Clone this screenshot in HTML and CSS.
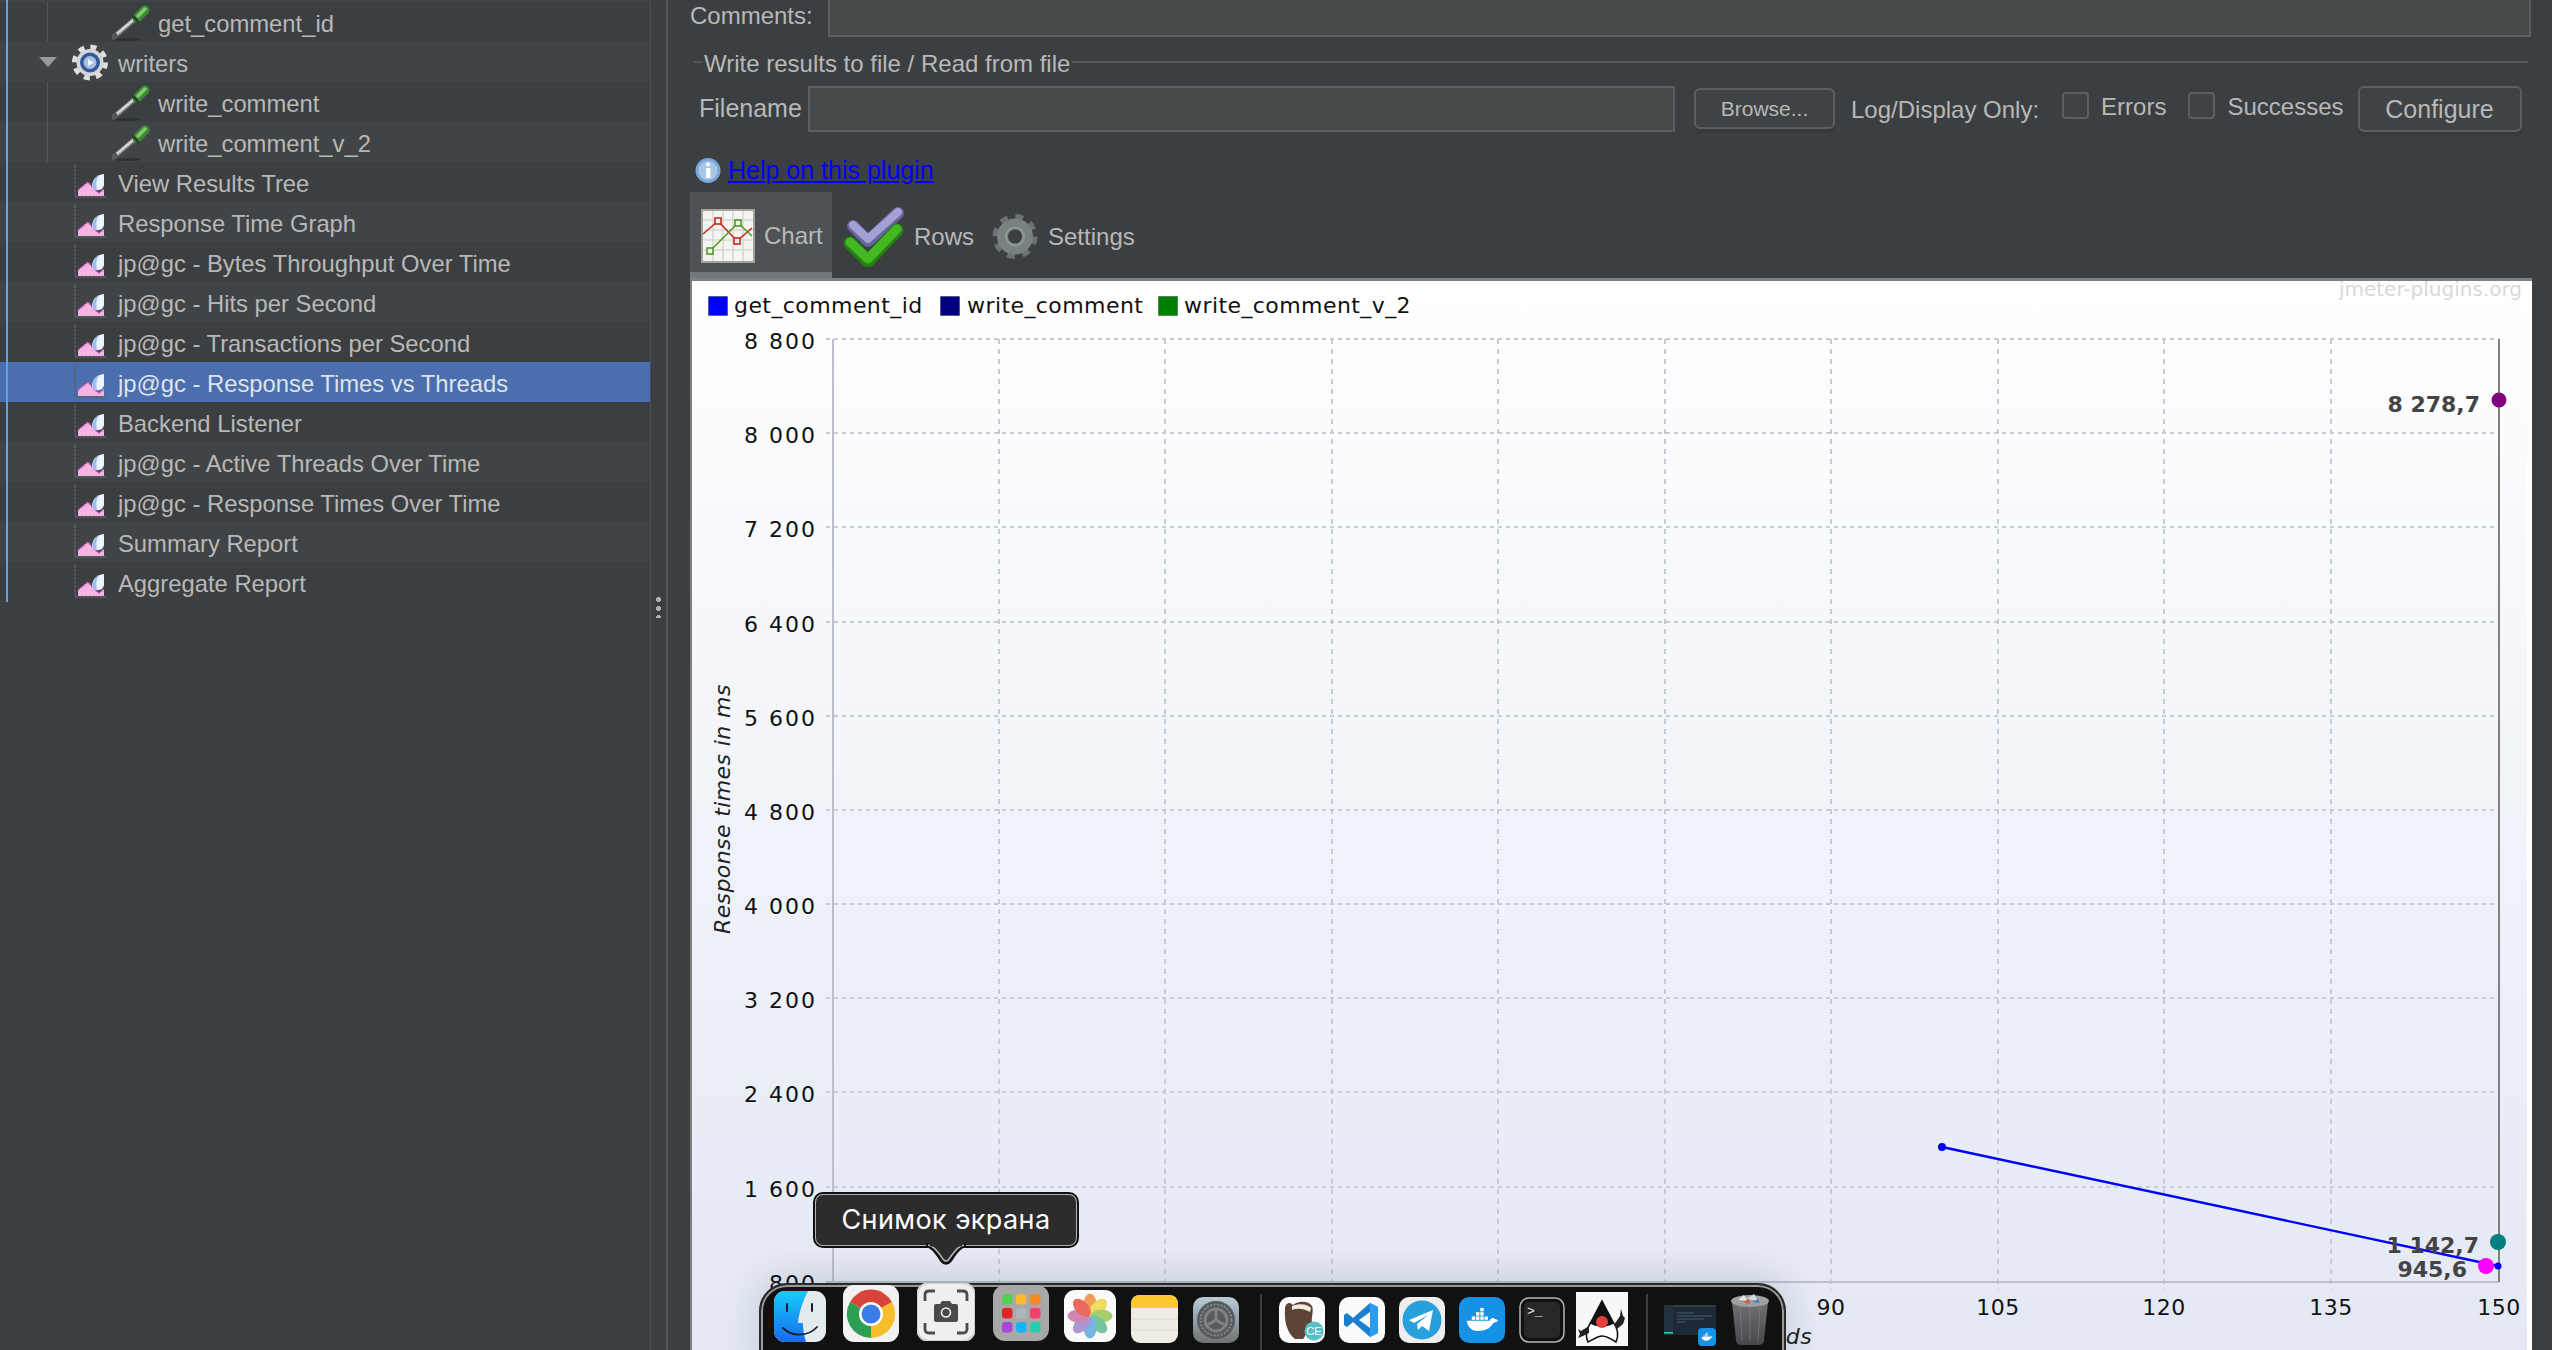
FILE: index.html
```html
<!doctype html>
<html>
<head>
    <meta charset="UTF-8">
    <title>Apache JMeter - Response Times vs Threads</title>
    <link rel="stylesheet" href="styles.css">
</head>

<body>
<svg class="defs" width="0" height="0">
    <defs>
        <symbol id="i-sampler" viewBox="0 0 38 37">
            <ellipse cx="15" cy="35.5" rx="14" ry="1.3" fill="#2b2d2f"/>
            <path d="M2 33 L23 15" stroke="#55585a" stroke-width="6" stroke-linecap="round"/>
            <path d="M5 30 L22 15.5" stroke="#d4d4d4" stroke-width="3"/>
            <path d="M7 30 L22 17.5" stroke="#8c8c8c" stroke-width="1.2" stroke-dasharray="2 1.5"/>
            <path d="M25 14 L33 6" stroke="#3f8a36" stroke-width="9" stroke-linecap="round"/>
            <path d="M26 12 L33 5" stroke="#80ca68" stroke-width="3.5" stroke-linecap="round"/>
            <path d="M20 11 L27 19" stroke="#2c3a2c" stroke-width="2.5"/>
        </symbol>
        <symbol id="i-listener" viewBox="0 0 34 34">
            <path d="M1 0 V32 H33" fill="none" stroke="#5e6163" stroke-width="1.5" stroke-dasharray="3 1"/>
            <path d="M4 31 V25 L14 17 L21 25 L25 28 L30 24 V31 Z" fill="#f5b4e4"/>
            <path d="M4 25 L14 17 L21 25 L25 28 L30 24" fill="none" stroke="#cf4fa8" stroke-width="1.5" stroke-dasharray="2 1.5"/>
            <path d="M18 22 C18 15 22 10 30 9 V20 C29 26 21 27 18 22 Z" fill="#eef4fd"/>
            <path d="M18 22 C18 16 21 12 25 10 C22 15 22 20 23 25 C21 25 19 24 18 22 Z" fill="#9dc0f0"/>
        </symbol>
        <symbol id="i-whale" viewBox="0 0 40 30">
            <g fill="#fff">
                <rect x="8" y="12" width="4" height="4"/><rect x="13" y="12" width="4" height="4"/>
                <rect x="18" y="12" width="4" height="4"/><rect x="13" y="7" width="4" height="4"/>
                <rect x="18" y="7" width="4" height="4"/><rect x="18" y="2" width="4" height="4"/>
                <rect x="23" y="12" width="4" height="4"/>
                <path d="M2 17 H29 C30 14 33 13 35 15 C37 15 38 16 39 17 C37 19 34 19 33 20 C30 26 24 29 15 29 C7 29 3 24 2 17 Z"/>
            </g>
        </symbol>
    </defs>
</svg>

<div class="app">
    <div class="tree">
        <div class="row-top"></div>
        <div class="row"><span class="guide"></span><svg class="ic-sampler"><use href="#i-sampler"/></svg><span class="label">get_comment_id</span></div>
        <div class="row alt">
            <span class="twisty"></span>
            <svg class="ic-gear" viewBox="0 0 36 37">
                <circle cx="18" cy="18.5" r="15.5" fill="none" stroke="#dedede" stroke-width="5" stroke-dasharray="6 6.17"/>
                <circle cx="18" cy="18.5" r="13.5" fill="#d6d6d6"/>
                <circle cx="18" cy="18.5" r="10" fill="#2f5a9e"/>
                <circle cx="18" cy="18.5" r="6.5" fill="#a8bfe0"/>
                <path d="M16 15 L22 18.5 L16 22 Z" fill="#f2f5fa"/>
            </svg>
            <span class="label">writers</span>
        </div>
        <div class="row"><span class="guide"></span><svg class="ic-sampler"><use href="#i-sampler"/></svg><span class="label">write_comment</span></div>
        <div class="row alt"><span class="guide"></span><svg class="ic-sampler"><use href="#i-sampler"/></svg><span class="label">write_comment_v_2</span></div>
        <div class="row leaf"><svg class="ic-listener"><use href="#i-listener"/></svg><span class="label">View Results Tree</span></div>
        <div class="row leaf alt"><svg class="ic-listener"><use href="#i-listener"/></svg><span class="label">Response Time Graph</span></div>
        <div class="row leaf"><svg class="ic-listener"><use href="#i-listener"/></svg><span class="label">jp@gc - Bytes Throughput Over Time</span></div>
        <div class="row leaf alt"><svg class="ic-listener"><use href="#i-listener"/></svg><span class="label">jp@gc - Hits per Second</span></div>
        <div class="row leaf"><svg class="ic-listener"><use href="#i-listener"/></svg><span class="label">jp@gc - Transactions per Second</span></div>
        <div class="row leaf selected"><svg class="ic-listener"><use href="#i-listener"/></svg><span class="label">jp@gc - Response Times vs Threads</span></div>
        <div class="row leaf"><svg class="ic-listener"><use href="#i-listener"/></svg><span class="label">Backend Listener</span></div>
        <div class="row leaf alt"><svg class="ic-listener"><use href="#i-listener"/></svg><span class="label">jp@gc - Active Threads Over Time</span></div>
        <div class="row leaf"><svg class="ic-listener"><use href="#i-listener"/></svg><span class="label">jp@gc - Response Times Over Time</span></div>
        <div class="row leaf alt"><svg class="ic-listener"><use href="#i-listener"/></svg><span class="label">Summary Report</span></div>
        <div class="row leaf"><svg class="ic-listener"><use href="#i-listener"/></svg><span class="label">Aggregate Report</span></div>
    </div>

    <div class="splitter"><span class="grip"></span></div>

    <div class="main">
        <div class="comments">
            <label>Comments:</label>
            <div class="field"></div>
        </div>

        <div class="legend"><span>Write results to file / Read from file</span></div>

        <div class="file-row">
            <label class="filename">Filename</label>
            <div class="field file-field"></div>
            <button class="btn btn-small">Browse...</button>
            <span class="log-label">Log/Display Only:</span>
            <span class="check"></span><span class="check-text">Errors</span>
            <span class="check check-2"></span><span class="check-text">Successes</span>
            <button class="btn btn-large">Configure</button>
        </div>

        <div class="help">
            <svg class="ic-info" viewBox="0 0 26 27">
                <circle cx="13" cy="13.5" r="12.5" fill="#7aa7d8"/>
                <circle cx="13" cy="13.5" r="9.5" fill="#a9c8e8"/>
                <circle cx="13" cy="7.5" r="2" fill="#fff"/>
                <rect x="11" y="11" width="4.5" height="10" fill="#fff"/>
            </svg>
            <a href="#">Help on this plugin</a>
        </div>

        <div class="tabs">
            <div class="tab tab-active">
                <svg class="ic-chart" viewBox="0 0 54 54">
                    <rect width="54" height="54" fill="#a2a2a0"/>
                    <rect x="2" y="2" width="50" height="50" fill="#f4f4f1"/>
                    <path d="M2 11 H52 M2 21 H52 M2 31 H52 M2 41 H52 M12 2 V52 M22 2 V52 M32 2 V52 M42 2 V52" stroke="#d6d6d3" stroke-width="1.6"/>
                    <path d="M2 25 L17 12 L36 32 L51 19" fill="none" stroke="#c8281c" stroke-width="1.6"/>
                    <path d="M9 42 L37 14 L51 27" fill="none" stroke="#4c9a22" stroke-width="1.6"/>
                    <rect x="14" y="9" width="6" height="6" fill="#f4f4f1" stroke="#c8281c" stroke-width="1.6"/>
                    <rect x="33" y="29" width="6" height="6" fill="#f4f4f1" stroke="#c8281c" stroke-width="1.6"/>
                    <rect x="34" y="11" width="6" height="6" fill="#f4f4f1" stroke="#4c9a22" stroke-width="1.6"/>
                    <rect x="6" y="39" width="6" height="6" fill="#f4f4f1" stroke="#4c9a22" stroke-width="1.6"/>
                </svg>
                <span>Chart</span>
            </div>
            <div class="tab">
                <svg class="ic-rows" viewBox="0 0 61 60">
                    <path d="M9 19 L24 34 L54 6" fill="none" stroke="#66649c" stroke-width="12" stroke-linecap="round" stroke-linejoin="round"/>
                    <path d="M9 18 L24 32 L54 5" fill="none" stroke="#a3a1d3" stroke-width="8" stroke-linecap="round" stroke-linejoin="round"/>
                    <path d="M6 36 L24 54 L53 23" fill="none" stroke="#23830f" stroke-width="13" stroke-linecap="round" stroke-linejoin="round"/>
                    <path d="M6 35 L24 52 L53 22" fill="none" stroke="#44b822" stroke-width="9" stroke-linecap="round" stroke-linejoin="round"/>
                </svg>
                <span>Rows</span>
            </div>
            <div class="tab">
                <svg class="ic-settings" viewBox="0 0 46 47">
                    <circle cx="23" cy="23.5" r="19" fill="none" stroke="#6c7273" stroke-width="7" stroke-dasharray="7.4 7.5"/>
                    <circle cx="23" cy="23.5" r="12.5" fill="none" stroke="#7a8181" stroke-width="11"/>
                    <circle cx="23" cy="23.5" r="9" fill="none" stroke="#929999" stroke-width="2"/>
                </svg>
                <span>Settings</span>
            </div>
        </div>

        <div class="chart">
            <svg class="plot" viewBox="692 281 1840 1069">
                <defs>
                    <linearGradient id="plot-bg" x1="0" y1="0" x2="0" y2="1">
                        <stop offset="0" stop-color="#ffffff"/>
                        <stop offset="1" stop-color="#e3e8f4"/>
                    </linearGradient>
                </defs>
                <rect x="692" y="281" width="1835" height="1069" fill="url(#plot-bg)"/>

                <rect class="swatch" x="708.5" y="296.5" width="19" height="19" fill="#0000ff"/>
                <text class="legend-text" x="734" y="313">get_comment_id</text>
                <rect class="swatch" x="940.5" y="296.5" width="19" height="19" fill="#000080"/>
                <text class="legend-text" x="967" y="313">write_comment</text>
                <rect class="swatch" x="1158.5" y="296.5" width="19" height="19" fill="#008000"/>
                <text class="legend-text" x="1184" y="313">write_comment_v_2</text>
                <text class="watermark" x="2522" y="296">jmeter-plugins.org</text>

                <path class="grid" d="M826 339 H2499 M826 433 H2499 M826 527 H2499 M826 622 H2499 M826 716 H2499 M826 810 H2499 M826 904 H2499 M826 998 H2499 M826 1092 H2499 M826 1187 H2499"/>
                <path class="grid-v" d="M999 339 V1290 M1165 339 V1290 M1332 339 V1290 M1498 339 V1290 M1665 339 V1290 M1831 339 V1290 M1998 339 V1290 M2164 339 V1290 M2331 339 V1290"/>
                <path class="axis" d="M833 339 V1283 M826 1282 H2499"/>
                <path class="axis-end" d="M2499 339 V1282"/>

                <g class="y-labels">
                    <text x="817" y="349">8 800</text>
                    <text x="817" y="443">8 000</text>
                    <text x="817" y="537">7 200</text>
                    <text x="817" y="632">6 400</text>
                    <text x="817" y="726">5 600</text>
                    <text x="817" y="820">4 800</text>
                    <text x="817" y="914">4 000</text>
                    <text x="817" y="1008">3 200</text>
                    <text x="817" y="1102">2 400</text>
                    <text x="817" y="1197">1 600</text>
                    <text x="817" y="1291">800</text>
                </g>
                <g class="x-labels">
                    <text x="1831" y="1315">90</text>
                    <text x="1998" y="1315">105</text>
                    <text x="2164" y="1315">120</text>
                    <text x="2331" y="1315">135</text>
                    <text x="2499" y="1315">150</text>
                </g>
                <text class="axis-title" transform="translate(730 934) rotate(-90)">Response times in ms</text>
                <text class="axis-title" x="1812" y="1344" text-anchor="end">Number of active threads</text>

                <path d="M1942 1147 L2498 1266" stroke="#0000ff" stroke-width="2.4" fill="none"/>
                <circle cx="1942" cy="1147" r="4" fill="#0000ff"/>
                <circle cx="2499" cy="400" r="7.5" fill="#800080"/>
                <circle cx="2498" cy="1242" r="8" fill="#008080"/>
                <circle cx="2486" cy="1266" r="8" fill="#ff00ff"/>
                <circle cx="2498" cy="1266" r="3.5" fill="#0000ff"/>
                <g class="point-labels">
                    <text x="2480" y="412">8 278,7</text>
                    <text x="2479" y="1253">1 142,7</text>
                    <text x="2467" y="1277">945,6</text>
                </g>
            </svg>
        </div>
    </div>
</div>

<div class="tooltip">
    Снимок экрана
    <svg class="tooltip-tip" viewBox="0 0 44 22">
        <path d="M2 1 C8 2 11 5 18 16 Q22 21 26 16 C33 5 36 2 42 1" fill="none" stroke="#111" stroke-width="4.5"/>
        <path d="M2 1 C8 2 11 5 18 16 Q22 21 26 16 C33 5 36 2 42 1 Z" fill="#2c2c2c"/>
        <path d="M4 1 C9 2 12 5 19 15 Q22 19 25 15 C32 5 35 2 40 1" fill="none" stroke="#b5b5b5" stroke-width="1.4"/>
        <path d="M6 0 H38 V2.5 H6 Z" fill="#2c2c2c"/>
    </svg>
</div>

<div class="dock">
    <svg class="d-finder" viewBox="0 0 52 51">
        <defs>
            <linearGradient id="finder-blue" x1="0" y1="0" x2="0" y2="1"><stop offset="0" stop-color="#14cdfb"/><stop offset="1" stop-color="#1a6bee"/></linearGradient>
            <clipPath id="finder-clip"><rect width="52" height="51" rx="11"/></clipPath>
        </defs>
        <g clip-path="url(#finder-clip)">
            <rect width="52" height="51" fill="#e4ebef"/>
            <path d="M0 0 H34 C28 12 25 22 24 32 H29 C29 38 30 45 32 51 H0 Z" fill="url(#finder-blue)"/>
            <path d="M13 13 V20 M38 13 V20" stroke="#15202e" stroke-width="2" stroke-linecap="round"/>
            <path d="M9 37 C18 46 34 46 43 36" fill="none" stroke="#15202e" stroke-width="1.8" stroke-linecap="round"/>
        </g>
    </svg>
    <svg class="d-chrome" viewBox="0 0 56 57">
        <rect width="56" height="57" rx="11" fill="#f2f2f2"/>
        <path d="M28 29 L7 17 A24 24 0 0 1 49 17 Z" fill="#d9443a"/>
        <path d="M28 29 L7 17 A24 24 0 0 0 28 53 Z" fill="#2f9e55"/>
        <path d="M28 29 L49 17 A24 24 0 0 1 28 53 Z" fill="#f8bd2c"/>
        <circle cx="28" cy="29" r="12" fill="#fff"/>
        <circle cx="28" cy="29" r="9.5" fill="#3a7de8"/>
    </svg>
    <svg class="d-shot" viewBox="0 0 58 58">
        <rect width="58" height="58" rx="12" fill="#efefef" stroke="#cfcfcf" stroke-width="2"/>
        <path d="M8 18 V12 Q8 8 12 8 H18 M40 8 H46 Q50 8 50 12 V18 M8 40 V46 Q8 50 12 50 H18 M40 50 H46 Q50 50 50 46 V40" fill="none" stroke="#4c4c4c" stroke-width="2.8"/>
        <path d="M17 23 Q17 21 19 21 H23 L25 18 H33 L35 21 H39 Q41 21 41 23 V37 Q41 39 39 39 H19 Q17 39 17 37 Z" fill="#4a4a4a"/>
        <circle cx="29" cy="29.5" r="4.5" fill="none" stroke="#efefef" stroke-width="1.6"/>
    </svg>
    <svg class="d-launch" viewBox="0 0 56 56">
        <rect width="56" height="56" rx="12" fill="#a8a8a8"/>
        <rect x="9" y="9" width="10.5" height="10.5" rx="3" fill="#53d052"/>
        <rect x="23" y="9" width="10.5" height="10.5" rx="3" fill="#fbbb2c"/>
        <rect x="37" y="9" width="10.5" height="10.5" rx="3" fill="#f58a25"/>
        <rect x="9" y="23" width="10.5" height="10.5" rx="3" fill="#e0242c"/>
        <rect x="23" y="23" width="10.5" height="10.5" rx="3" fill="#a9b5ba"/>
        <rect x="37" y="23" width="10.5" height="10.5" rx="3" fill="#f0416a"/>
        <rect x="9" y="37" width="10.5" height="10.5" rx="3" fill="#a848d8"/>
        <rect x="23" y="37" width="10.5" height="10.5" rx="3" fill="#11b4f7"/>
        <rect x="37" y="37" width="10.5" height="10.5" rx="3" fill="#24cfb0"/>
    </svg>
    <svg class="d-photos" viewBox="0 0 52 52">
        <rect width="52" height="52" rx="11" fill="#fbfbfb"/>
        <g opacity=".82">
            <ellipse cx="26" cy="14.5" rx="6.5" ry="11" fill="#f28a2e"/>
            <ellipse cx="26" cy="14.5" rx="6.5" ry="11" fill="#ecd73c" transform="rotate(45 26 26)"/>
            <ellipse cx="26" cy="14.5" rx="6.5" ry="11" fill="#93c650" transform="rotate(90 26 26)"/>
            <ellipse cx="26" cy="14.5" rx="6.5" ry="11" fill="#57b98a" transform="rotate(135 26 26)"/>
            <ellipse cx="26" cy="14.5" rx="6.5" ry="11" fill="#5aa5e0" transform="rotate(180 26 26)"/>
            <ellipse cx="26" cy="14.5" rx="6.5" ry="11" fill="#9a80c6" transform="rotate(225 26 26)"/>
            <ellipse cx="26" cy="14.5" rx="6.5" ry="11" fill="#c86fa0" transform="rotate(270 26 26)"/>
            <ellipse cx="26" cy="14.5" rx="6.5" ry="11" fill="#e84a40" transform="rotate(315 26 26)"/>
        </g>
    </svg>
    <svg class="d-notes" viewBox="0 0 47 48">
        <rect width="47" height="48" rx="9" fill="#efece4"/>
        <path d="M0 13 V9 Q0 0 9 0 H38 Q47 0 47 9 V13 Z" fill="#fdc92e"/>
        <path d="M0 24 H47 M0 35 H47" stroke="#dcd9d0" stroke-width="1"/>
    </svg>
    <svg class="d-prefs" viewBox="0 0 46 46">
        <defs><linearGradient id="prefs-bg" x1="0" y1="0" x2="0" y2="1"><stop offset="0" stop-color="#b9ccd6"/><stop offset="1" stop-color="#6f7275"/></linearGradient></defs>
        <rect width="46" height="46" rx="10" fill="url(#prefs-bg)"/>
        <circle cx="23" cy="23" r="19" fill="#565a5e"/>
        <circle cx="23" cy="23" r="15.5" fill="none" stroke="#85898d" stroke-width="2" stroke-dasharray="2 1.5"/>
        <circle cx="23" cy="23" r="11" fill="none" stroke="#7e8286" stroke-width="3"/>
        <path d="M23 23 V13 M23 23 L14 28 M23 23 L32 28" stroke="#7e8286" stroke-width="3"/>
    </svg>
    <span class="dock-sep"></span>
    <svg class="d-dbeaver" viewBox="0 0 46 46">
        <rect width="46" height="46" rx="10" fill="#fbfbfb"/>
        <path d="M6 12 C6 6 11 4 14 8 C20 3 30 4 33 9 C35 14 32 21 33 26 C26 34 28 38 24 42 H16 C8 36 5 24 6 12 Z" fill="#5d4436"/>
        <path d="M13 9 C20 6 29 7 32 11 L31 15 C24 11 18 11 13 13 Z" fill="#efe9e0"/>
        <circle cx="35" cy="34" r="9.5" fill="#55c0c6"/>
        <text class="dbeaver-ce" x="35" y="38">CE</text>
    </svg>
    <svg class="d-vscode" viewBox="0 0 46 46">
        <rect width="46" height="46" rx="10" fill="#fbfbfb"/>
        <path d="M31 6 L39 10 V36 L31 40 L14 25 L8 30 L5 28 V18 L8 16 L14 21 Z M31 15 L20 23 L31 31 Z" fill="#1b7fd0" fill-rule="evenodd"/>
        <path d="M31 6 L39 10 V36 L31 40 Z" fill="#2a9cec"/>
    </svg>
    <svg class="d-telegram" viewBox="0 0 46 46">
        <rect width="46" height="46" rx="10" fill="#eeeeee"/>
        <circle cx="23" cy="23" r="19.5" fill="#27a0dc"/>
        <path d="M10 23 L34 13 L30 34 L23 29 L19 33 L18 27 L29 18 L15 26 Z" fill="#fff"/>
    </svg>
    <svg class="d-docker" viewBox="0 0 46 46">
        <rect width="46" height="46" rx="10" fill="#1592e6"/>
        <use href="#i-whale" x="6" y="9" width="34" height="26"/>
    </svg>
    <svg class="d-term" viewBox="0 0 46 46">
        <rect x="1" y="1" width="44" height="44" rx="9" fill="#111" stroke="#b5b5b5" stroke-width="1.5"/>
        <rect x="5" y="5" width="36" height="36" rx="5" fill="#282828"/>
        <text class="term-text" x="8" y="18">&gt;_</text>
    </svg>
    <svg class="d-duke" viewBox="0 0 52 54">
        <rect width="52" height="54" fill="#f8f8f8"/>
        <path d="M26 9 L37 30 C42 36 43 44 40 50 C34 46 30 44 26 44 C22 44 16 48 12 50 C9 44 11 36 15 30 Z" fill="#fff" stroke="#111" stroke-width="1.6"/>
        <path d="M26 9 L38 31 C32 36 20 36 14 31 Z" fill="#111"/>
        <circle cx="26" cy="30" r="6" fill="#e0423a"/>
        <path d="M38 33 L44 24 L45 17 L47 24 L49 26 L47 32 L41 37 Z" fill="#222"/>
        <path d="M13 34 L5 39 L2 37 L4 42 L2 46 L7 44 L13 41 Z" fill="#222"/>
    </svg>
    <span class="dock-sep sep-2"></span>
    <div class="d-thumb">
        <svg class="thumb-window" viewBox="0 0 52 30">
            <rect width="52" height="30" fill="#1d2a36"/>
            <rect width="52" height="2" fill="#2f3d49"/>
            <rect width="9" height="30" fill="#24323e"/>
            <path d="M13 8 H30 M13 11 H48 M13 14 H40 M13 17 H22" stroke="#4a5a68" stroke-width="1"/>
            <rect y="27" width="9" height="1.5" fill="#3ccf9f"/>
        </svg>
        <svg class="thumb-badge" viewBox="0 0 18 18">
            <rect width="18" height="18" rx="4" fill="#1592e6"/>
            <use href="#i-whale" x="3" y="3" width="12" height="11"/>
        </svg>
    </div>
    <svg class="d-trash" viewBox="0 0 40 52">
        <defs><linearGradient id="trash-bg" x1="0" y1="0" x2="0" y2="1"><stop offset="0" stop-color="#6f7173"/><stop offset="1" stop-color="#45474a"/></linearGradient></defs>
        <path d="M2 9 L6 47 Q6 52 12 52 H28 Q34 52 34 47 L38 9 Z" fill="url(#trash-bg)"/>
        <path d="M10 12 L12 48 M20 12 V48 M30 12 L28 48" stroke="#8a8c8e" stroke-width="1" opacity=".5"/>
        <ellipse cx="20" cy="8" rx="19" ry="6" fill="#9ea0a2"/>
        <path d="M8 7 L14 2 L18 8 Z" fill="#e5e5e5"/><path d="M17 6 L24 1 L28 8 Z" fill="#d9d9d9"/>
        <path d="M13 9 L19 6 L20 11 Z" fill="#d9534a"/><path d="M22 9 L28 6 L30 10 Z" fill="#4a7fc0"/>
    </svg>
</div>

</body>

</html>
```

FILE: styles.css
```css
html, body {
    margin: 0;
    height: 100%;
    overflow: hidden;
}
body {
    background-color: #3c3f41;
    color: #b8b8b8;
    font-family: "Liberation Sans", Arial, sans-serif;
    font-size: 24px;
}
.defs {
    position: absolute;
}
.app {
    display: flex;
    height: 1350px;
}

/* left tree */
.tree {
    position: relative;
    flex: none;
    width: 650px;
    font-size: 23.8px;
}
.tree::before {
    content: "";
    position: absolute;
    left: 6px;
    top: 0;
    width: 2px;
    height: 602px;
    background-color: #5da5e8;
    z-index: 1;
}
.row-top {
    height: 2px;
    background-color: #424547;
}
.row {
    display: flex;
    align-items: center;
    height: 40px;
    background-color: #3c3f41;
}
.row.alt {
    background-color: #414446;
}
.row.selected {
    background-color: #4b6eaf;
    color: #dfe3ea;
}
.label {
    padding-top: 3px;
}
.leaf {
    padding-left: 74px;
    gap: 10px;
}
.guide {
    align-self: stretch;
    width: 1px;
    margin-left: 47px;
    margin-right: 64px;
    background-color: #55585a;
}
.ic-sampler {
    width: 38px;
    height: 37px;
    margin-right: 8px;
}
.ic-listener {
    width: 34px;
    height: 34px;
}
.twisty {
    width: 0;
    height: 0;
    margin-left: 39px;
    margin-right: 15px;
    border-left: 9px solid transparent;
    border-right: 9px solid transparent;
    border-top: 10px solid #999;
}
.ic-gear {
    width: 36px;
    height: 37px;
    margin-right: 10px;
}

/* splitter */
.splitter {
    flex: none;
    display: flex;
    align-items: flex-start;
    justify-content: center;
    width: 18px;
    border-left: 1px solid #4a4d4f;
    border-right: 2px solid #53565a;
    box-sizing: border-box;
}
.grip {
    width: 5px;
    height: 23px;
    margin-top: 595px;
    background-image: radial-gradient(circle, #b0b0b0 2.4px, transparent 2.8px);
    background-size: 5px 9px;
}

/* right panel */
.main {
    flex: 1;
    display: flex;
    flex-direction: column;
    min-width: 0;
    padding-left: 22px;
    padding-right: 20px;
}
.comments {
    display: flex;
    height: 37px;
}
.comments label {
    width: 138px;
    line-height: 32px;
}
.field {
    background-color: #474a4b;
    border: 2px solid #5c5f61;
    box-sizing: border-box;
}
.comments .field {
    flex: 1;
    margin-right: 1px;
    border-top: 0;
}
.legend {
    display: flex;
    align-items: center;
    height: 30px;
    margin-top: 10px;
    margin-left: 4px;
    margin-right: 4px;
}
.legend::before, .legend::after {
    content: "";
    height: 2px;
    background-color: #54575a;
}
.legend::before {
    width: 9px;
}
.legend::after {
    flex: 1;
    margin-left: 2px;
}
.legend span {
    margin-left: 1px;
    padding-top: 3px;
}
.file-row {
    display: flex;
    align-items: flex-start;
    height: 46px;
    margin-top: 9px;
}
.filename {
    width: 109px;
    padding-left: 9px;
    font-size: 25px;
    line-height: 44px;
}
.file-field {
    width: 867px;
    height: 46px;
}
.btn {
    background-color: #3f4345;
    border: 2px solid #5c5f61;
    border-radius: 6px;
    box-shadow: 0 4px 0 #38393b;
    color: #b8b8b8;
    font-family: inherit;
    padding: 0;
    box-sizing: border-box;
}
.btn-small {
    width: 141px;
    height: 41px;
    margin-top: 2px;
    margin-left: 19px;
    font-size: 21px;
}
.btn-large {
    width: 164px;
    height: 46px;
    margin-left: 14px;
    font-size: 25px;
}
.log-label {
    margin-left: 16px;
    line-height: 48px;
}
.check {
    width: 27px;
    height: 27px;
    margin-top: 6px;
    margin-left: 23px;
    background-color: #3f4345;
    border: 2px solid #5c5f61;
    border-radius: 4px;
    box-sizing: border-box;
}
.check-2 {
    margin-left: 22px;
}
.check-text {
    margin-left: 12px;
    line-height: 41px;
}
.help {
    display: flex;
    align-items: center;
    height: 34px;
    margin-top: 21px;
    margin-bottom: 5px;
    margin-left: 5px;
}
.help a {
    color: #0000ff;
    font-size: 25px;
    text-decoration: underline;
}
.ic-info {
    width: 26px;
    height: 27px;
    margin-right: 7px;
}
.tabs {
    display: flex;
    height: 86px;
    flex: none;
}
.tab {
    display: flex;
    align-items: center;
    box-sizing: border-box;
    height: 86px;
    padding-top: 3px;
}
.tab-active {
    width: 142px;
    background-color: #4e5254;
    border-bottom: 6px solid #74777a;
    padding-left: 11px;
    padding-top: 8px;
}
.ic-chart {
    width: 54px;
    height: 54px;
    margin-right: 9px;
}
.ic-rows {
    width: 61px;
    height: 60px;
    margin-left: 12px;
    margin-right: 9px;
}
.ic-settings {
    width: 46px;
    height: 47px;
    margin-left: 18px;
    margin-right: 10px;
}

/* chart, coordinates inside the svg are page pixels */
.chart {
    flex: 1;
    min-height: 0;
    background-color: #fff;
    border-left: 2px solid #808080;
    border-top: 3px solid #808080;
}
.plot {
    display: block;
    width: 1840px;
    height: 1069px;
    overflow: visible;
    font-family: "DejaVu Sans", sans-serif;
}
.swatch {
    stroke: rgba(0, 0, 0, .3);
    stroke-width: 1;
}
.legend-text {
    font-size: 22px;
    letter-spacing: .42px;
    fill: #111;
}
.watermark {
    font-size: 20px;
    fill: #d7d9dc;
    text-anchor: end;
}
.grid {
    fill: none;
    stroke: #c8cbd6;
    stroke-width: 2;
    stroke-dasharray: 4 4;
}
.grid-v {
    fill: none;
    stroke: #c8cbd6;
    stroke-width: 2;
    stroke-dasharray: 5 5;
}
.axis {
    fill: none;
    stroke: #bcbfca;
    stroke-width: 2;
}
.axis-end {
    fill: none;
    stroke: #808080;
    stroke-width: 2;
}
.y-labels text {
    font-size: 22px;
    letter-spacing: 2px;
    text-anchor: end;
    fill: #111;
}
.x-labels text {
    font-size: 22px;
    letter-spacing: .5px;
    text-anchor: middle;
    fill: #111;
}
.axis-title {
    font-size: 22px;
    font-style: italic;
    letter-spacing: .4px;
    fill: #222;
}
.point-labels text {
    font-size: 22px;
    font-weight: bold;
    text-anchor: end;
    fill: #444;
}

/* mac dock over the page */
.tooltip {
    position: absolute;
    left: 814px;
    top: 1193px;
    width: 264px;
    height: 54px;
    box-sizing: border-box;
    background-color: #2c2c2c;
    border: 2px solid #b5b5b5;
    outline: 2px solid #111;
    outline-offset: -1px;
    border-radius: 9px;
    color: #fff;
    font-family: "Inter", "Noto Sans", sans-serif;
    font-size: 27px;
    letter-spacing: .4px;
    line-height: 50px;
    text-align: center;
    z-index: 3;
}
.tooltip-tip {
    position: absolute;
    left: 108px;
    top: 49px;
    width: 44px;
    height: 22px;
    overflow: visible;
}
.dock {
    position: absolute;
    left: 759px;
    top: 1283px;
    width: 1027px;
    height: 100px;
    box-sizing: border-box;
    display: flex;
    align-items: flex-start;
    background-color: #111;
    border: 2px solid #2a2a2a;
    border-radius: 28px 28px 0 0;
    box-shadow: inset 0 0 0 2px #9a9a9a, 0 -6px 34px rgba(40, 50, 80, .16);
    z-index: 2;
}
.dock svg, .dock > span, .dock > div {
    flex: none;
}
.d-finder { width: 52px; height: 51px; margin: 6px 0 0 13px; }
.d-chrome { width: 56px; height: 57px; margin: 0 0 0 17px; }
.d-shot { width: 58px; height: 58px; margin: -2px 0 0 18px; }
.d-launch { width: 56px; height: 56px; margin: 0 0 0 18px; }
.d-photos { width: 52px; height: 52px; margin: 5px 0 0 15px; }
.d-notes { width: 47px; height: 48px; margin: 10px 0 0 15px; }
.d-prefs { width: 46px; height: 46px; margin: 12px 0 0 15px; }
.dock-sep {
    width: 2px;
    height: 60px;
    margin: 9px 0 0 21px;
    background-color: #3c3c3c;
}
.d-dbeaver { width: 46px; height: 46px; margin: 12px 0 0 17px; }
.d-vscode { width: 46px; height: 46px; margin: 12px 0 0 14px; }
.d-telegram { width: 46px; height: 46px; margin: 12px 0 0 14px; }
.d-docker { width: 46px; height: 46px; margin: 12px 0 0 14px; }
.d-term { width: 46px; height: 46px; margin: 12px 0 0 14px; }
.d-duke { width: 52px; height: 54px; margin: 7px 0 0 11px; }
.sep-2 { margin-left: 18px; }
.d-thumb {
    position: relative;
    width: 52px;
    height: 40px;
    margin: 20px 0 0 16px;
}
.thumb-window {
    display: block;
    width: 52px;
    height: 30px;
}
.thumb-badge {
    position: absolute;
    right: 0;
    top: 23px;
    width: 18px;
    height: 18px;
}
.d-trash { width: 40px; height: 52px; margin: 8px 0 0 14px; }
.dbeaver-ce {
    font-family: "Liberation Sans", sans-serif;
    font-size: 11px;
    text-anchor: middle;
    fill: #fff;
}
.term-text {
    font-family: "Liberation Mono", monospace;
    font-size: 13px;
    fill: #eee;
}
```
